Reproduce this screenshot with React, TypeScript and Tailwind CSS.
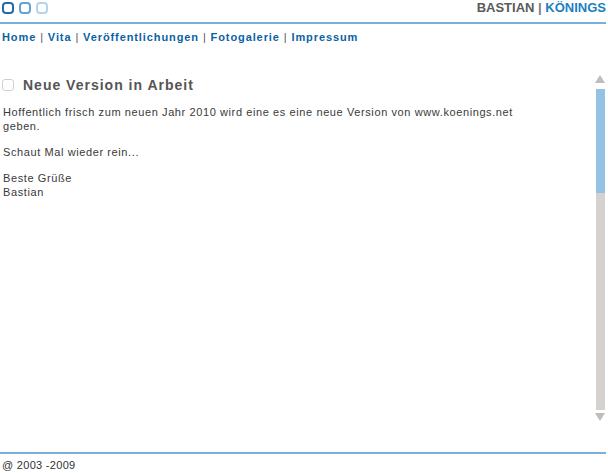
export default function App() {
  const links = ['Home', 'Vita', 'Veröffentlichungen', 'Fotogalerie', 'Impressum']

  return (
    <div className="w-[608px] h-[473px] bg-white flex flex-col overflow-hidden font-['Liberation_Sans',Arial,sans-serif]">
      {/* Kopfzeile */}
      <div className="h-[24px] flex justify-between border-b-2 border-[#7ab0d8] mr-[2px]">
        <div className="flex gap-[5px] pl-[2px] pt-[2px]">
          <div className="w-[12px] h-[12px] rounded-[4px] border-2 border-[#1f6dab]" />
          <div className="w-[12px] h-[12px] rounded-[4px] border-2 border-[#62a3d4]" />
          <div className="w-[12px] h-[12px] rounded-[4px] border-2 border-[#b3d4ec]" />
        </div>
        <div className="text-[13px] font-bold leading-none pt-[1px] tracking-[0px]">
          <span className="text-[#5a5a5a]">BASTIAN</span>
          <span className="text-[#777]"> | </span>
          <span className="text-[#1b7fc2]">KÖNINGS</span>
        </div>
      </div>

      {/* Navigation */}
      <div className="pl-[2px] pt-[6px] text-[11px] font-bold leading-[14px] tracking-[0.9px]">
        {links.map((l, i) => (
          <span key={l}>
            {i > 0 && <span className="text-[#555] font-normal"> | </span>}
            <span className="text-[#0a62a3]">{l}</span>
          </span>
        ))}
      </div>

      {/* Inhalt */}
      <div className="flex-1 flex pt-[31px] min-h-0">
        <div className="flex-1 pl-[3px] pr-[60px]">
          <div className="flex items-center gap-[9px] h-[20px] -ml-[1px]">
            <div className="w-[12px] h-[12px] rounded-[3px] border border-[#cfcfcf]" />
            <h1 className="text-[14px] font-bold tracking-[1px] text-[#555]">Neue Version in Arbeit</h1>
          </div>
          <div className="mt-[10px] text-[11px] leading-[14px] tracking-[0.6px] text-[#3a3a3a]">
            <p>Hoffentlich frisch zum neuen Jahr 2010 wird eine es eine neue Version von www.koenings.net geben.</p>
            <p className="mt-[12px]">Schaut Mal wieder rein...</p>
            <p className="mt-[12px]">Beste Grüße<br />Bastian</p>
          </div>
        </div>

        {/* Scrollbalken */}
        <div className="w-[12px] mr-[2px] flex flex-col items-center pb-[31px]">
          <div className="w-0 h-0 border-l-[5px] border-r-[5px] border-b-[8px] border-l-transparent border-r-transparent border-b-[#bdbdbd]" />
          <div className="w-[9px] flex-1 mt-[6px] flex flex-col bg-[#d5d1ce]">
            <div className="h-[104px] bg-[#93c2e3]" />
          </div>
          <div className="mt-[3px] w-0 h-0 border-l-[5px] border-r-[5px] border-t-[8px] border-l-transparent border-r-transparent border-t-[#bdbdbd]" />
        </div>
      </div>

      {/* Fuß */}
      <div className="border-t-2 border-[#7ab0d8] mr-[2px] h-[21px] pl-[2px] pt-[5px] text-[11px] leading-[12px] tracking-[0.3px] text-[#333]">
        @ 2003 -2009
      </div>
    </div>
  )
}
